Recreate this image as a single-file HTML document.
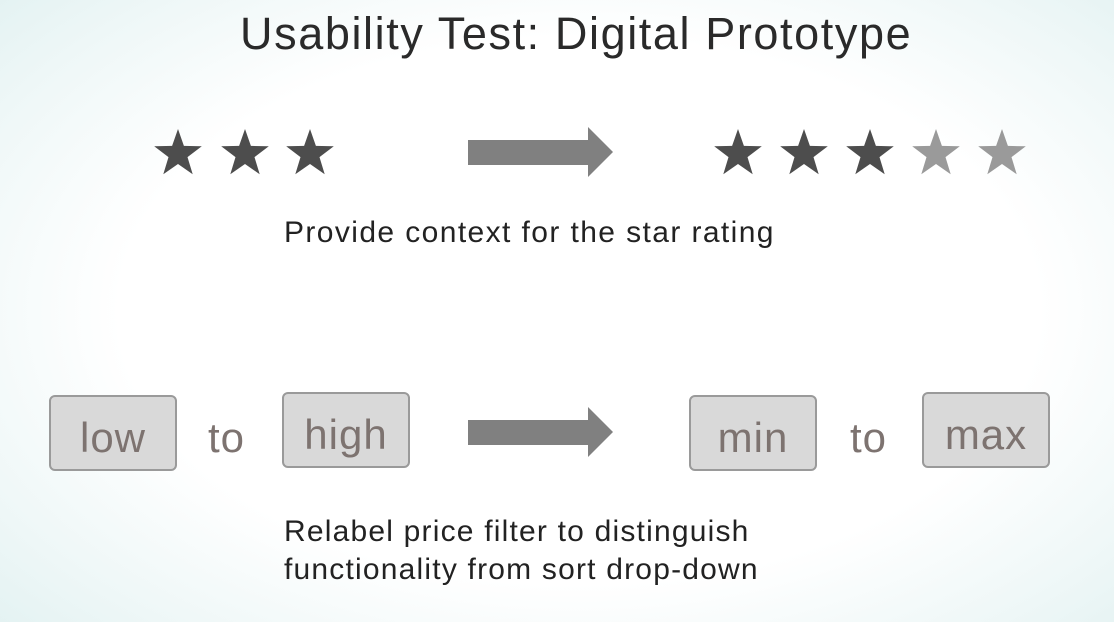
<!DOCTYPE html>
<html><head><style>
body{margin:0;width:1114px;height:622px;overflow:hidden;font-family:"Liberation Sans",sans-serif;
background:radial-gradient(ellipse 75% 80% at 52% 50%,#ffffff 55%,#eef7f7 80%,#dff0f0 100%);position:relative}
.t{position:absolute;color:#222;white-space:nowrap}
.box{position:absolute;width:128px;height:76px;background:#d9d9d9;border:2px solid #9a9a9a;border-radius:6px;box-sizing:border-box;
color:#7d7370;font-size:42px;letter-spacing:1px;text-align:center;line-height:82px}
.to{position:absolute;color:#7d7370;font-size:42px;letter-spacing:1px}
</style></head><body>
<div class="t" style="left:240px;top:8px;font-size:45px;letter-spacing:1.6px;color:#2a2a2a">Usability Test: Digital Prototype</div>
<svg width="1114" height="622" style="position:absolute;left:0;top:0">
<defs><polygon id="s" points="0,-25 5.9,-8.1 23.8,-7.7 9.5,3.1 14.7,20.2 0,10 -14.7,20.2 -9.5,3.1 -23.8,-7.7 -5.9,-8.1"/></defs>
<use href="#s" x="178" y="154" fill="#4d4d4d"/><use href="#s" x="245" y="154" fill="#4d4d4d"/><use href="#s" x="310" y="154" fill="#4d4d4d"/>
<use href="#s" x="738" y="154" fill="#4d4d4d"/><use href="#s" x="804" y="154" fill="#4d4d4d"/><use href="#s" x="870" y="154" fill="#4d4d4d"/>
<use href="#s" x="936" y="154" fill="#9a9a9a"/><use href="#s" x="1002" y="154" fill="#9a9a9a"/>
<polygon points="468,140 588,140 588,127 613,152 588,177 588,165 468,165" fill="#808080"/>
<polygon points="468,420 588,420 588,407 613,432 588,457 588,445 468,445" fill="#808080"/>
</svg>
<div class="t" style="left:284px;top:216px;font-size:30px;letter-spacing:1.4px">Provide context for the star rating</div>
<div class="box" style="left:49px;top:395px">low</div>
<div class="to" style="left:208px;top:414px">to</div>
<div class="box" style="left:282px;top:392px">high</div>
<div class="box" style="left:689px;top:395px">min</div>
<div class="to" style="left:850px;top:414px">to</div>
<div class="box" style="left:922px;top:392px">max</div>
<div class="t" style="left:284px;top:513px;font-size:30px;letter-spacing:1.2px;line-height:38px">Relabel price filter to distinguish<br>functionality from sort drop-down</div>
</body></html>
